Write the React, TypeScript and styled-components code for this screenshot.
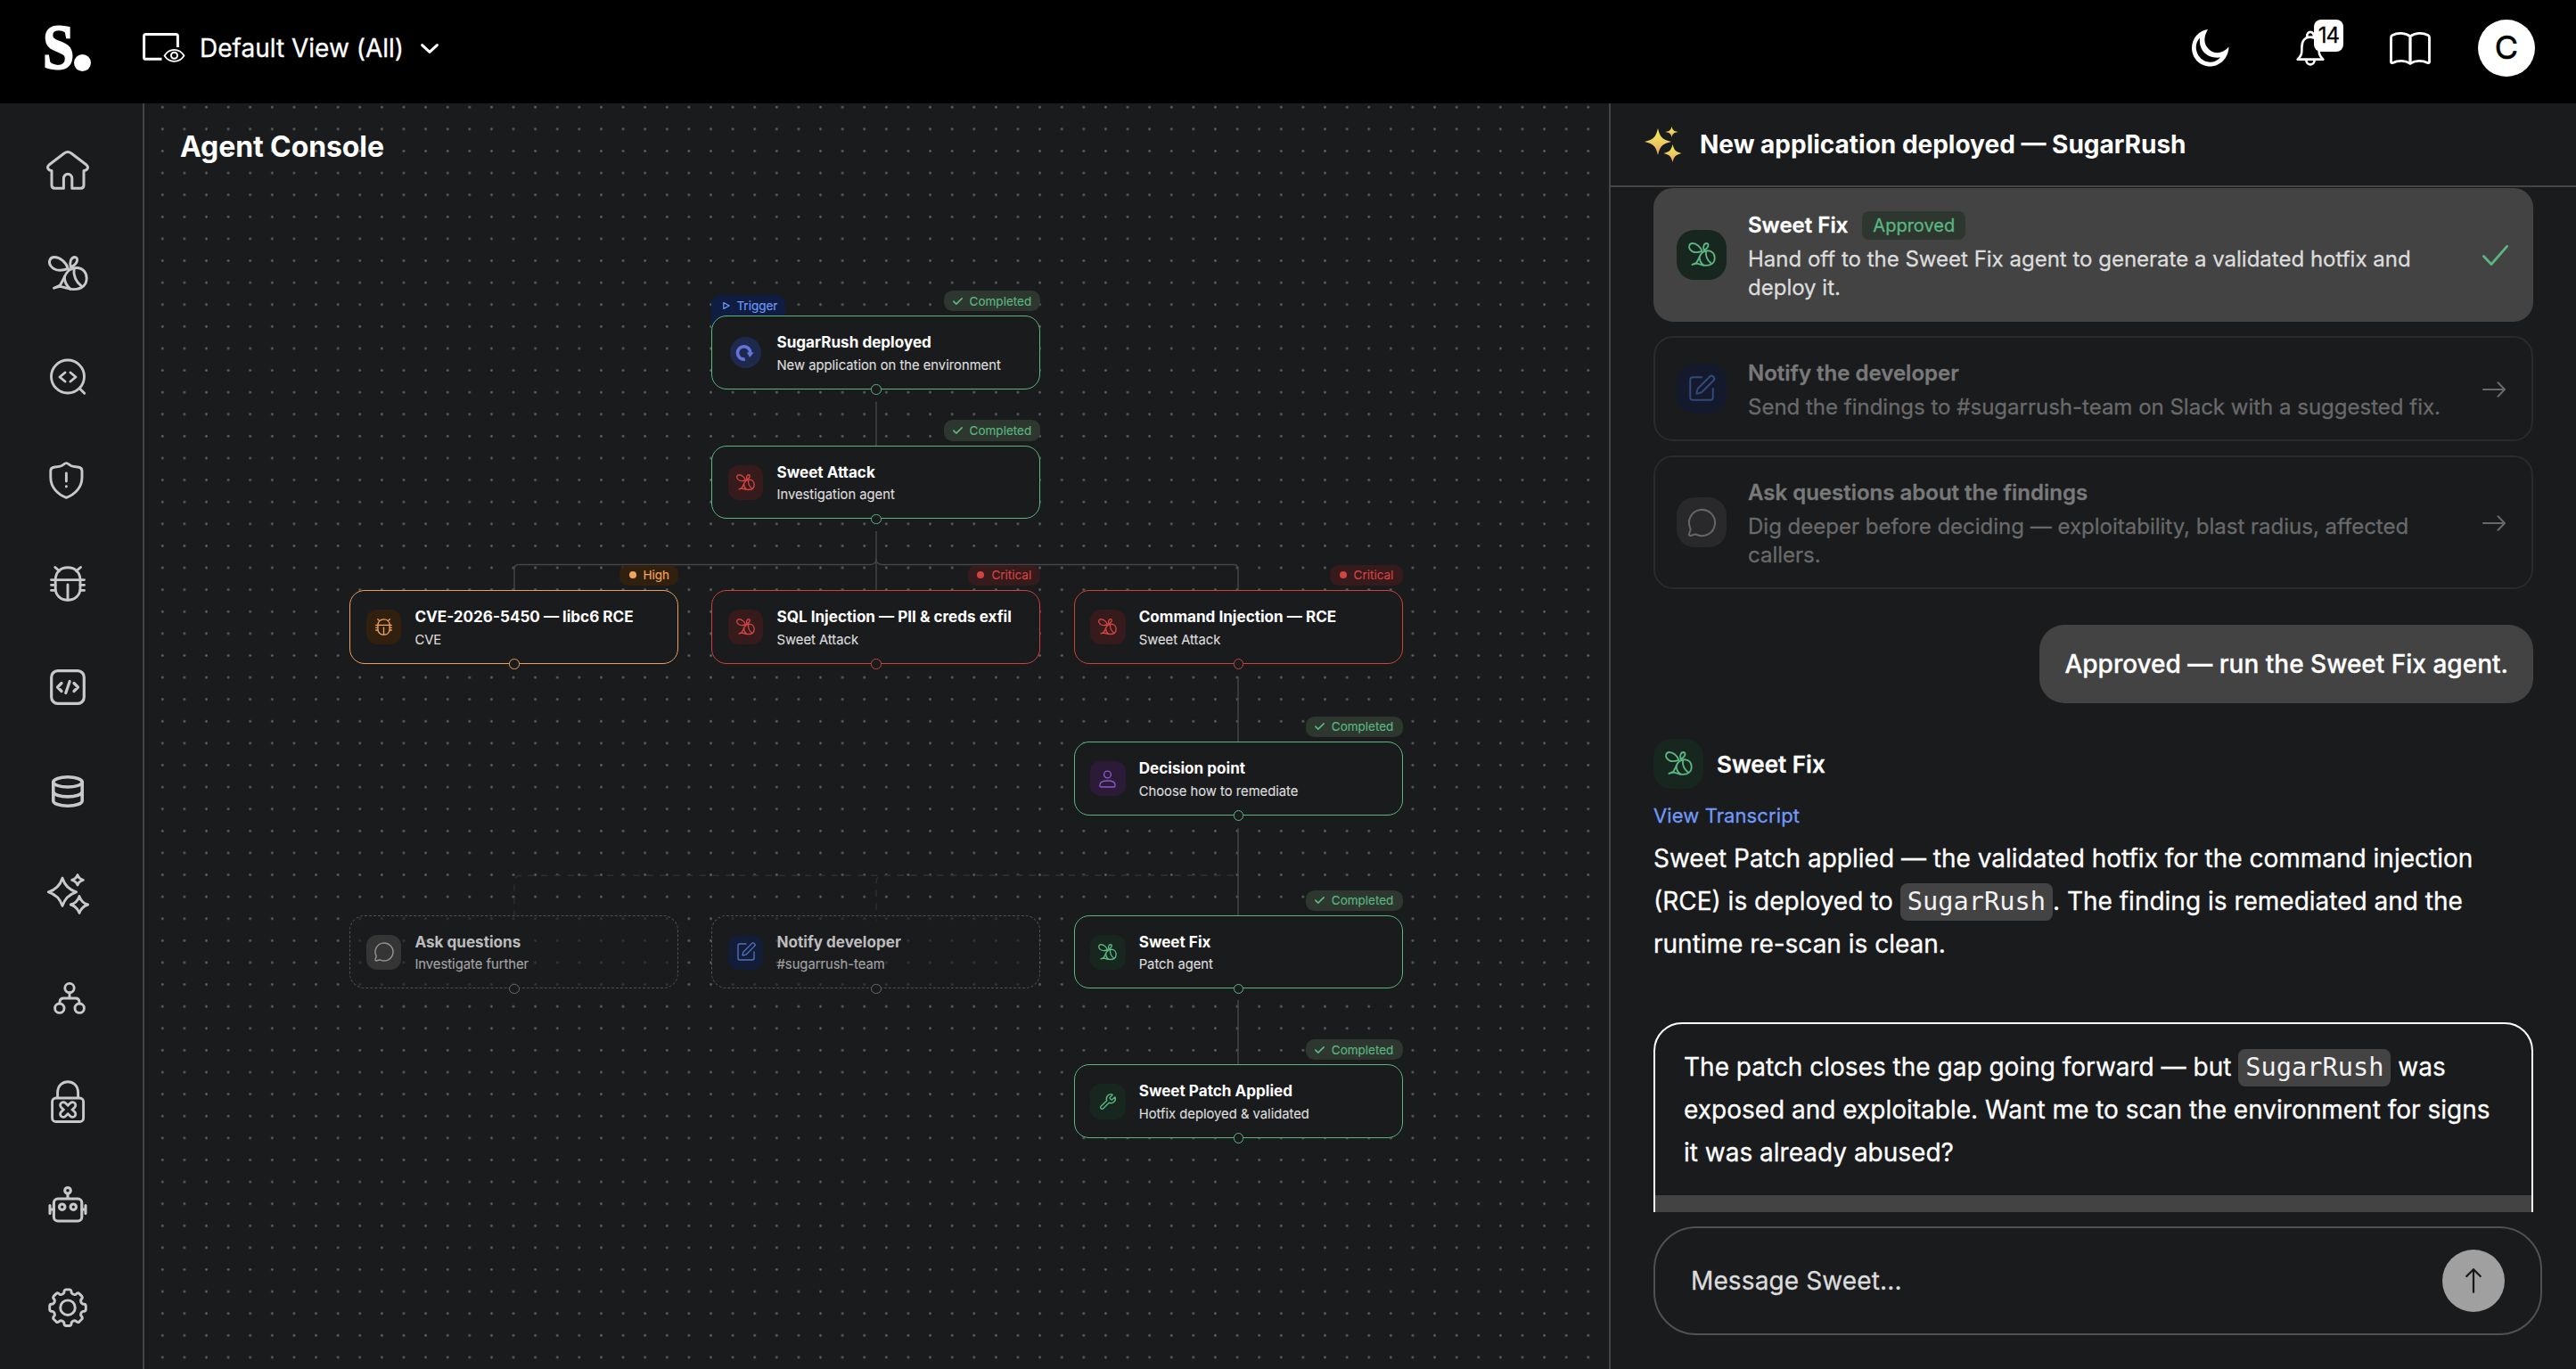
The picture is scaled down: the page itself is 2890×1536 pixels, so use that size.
import React from "react";
import styled, { createGlobalStyle, css } from "styled-components";
import { SquarePen, Wrench, MessageCircle } from "lucide-react";

const c = {
  bg: "#1a1b1d",
  line: "#444445",
  soft: "#434343",
  icon: "#c9c9c9",
  text: "#ffffff",
  dim: "#dcdcdc",
  green: "#5bb682",
  greenBg: "#17261f",
  pillGreen: "#2d362f",
  red: "#d14442",
  redBg: "#361a1c",
  orange: "#f0a45f",
  orangeBg: "#32200f",
  blue: "#7099f8",
  blueBg: "#0f1d42",
  purple: "#8c58c8",
  purpleBg: "#2b1b38",
};

const GlobalStyle = createGlobalStyle`
  * { box-sizing: border-box; }
  html, body { margin: 0; background: #000; }
  body {
    font-family: Inter, "Liberation Sans", sans-serif;
    color: ${c.text};
    overflow: hidden;
    -webkit-text-stroke: 0.3px currentColor;
  }
`;

/* ---------- shell ---------- */

const Shell = styled.div`
  width: 2890px;
  height: 1536px;
  display: flex;
  flex-direction: column;
  background: ${c.bg};
  overflow: hidden;
`;

const TopBar = styled.header`
  height: 116px;
  flex: none;
  background: #000;
  display: flex;
  align-items: flex-start;
  justify-content: space-between;
  padding: 22px 46px 0 50px;
`;

const TopLeft = styled.div`
  display: flex;
  align-items: center;
  height: 64px;
`;

const Logo = styled.div`
  width: 110px;
  height: 64px;
  display: flex;
  align-items: flex-end;
  padding-bottom: 6px;
`;

const LogoLetter = styled.span`
  font: 700 72px/47px "Liberation Serif", serif;
  width: 40px;
  height: 50px;
  margin: 0 -5px 0 -2px;
  -webkit-text-stroke: 2px #fff;
  transform: scaleX(0.88);
  transform-origin: left;
`;

const LogoDot = styled.span`
  width: 19px;
  height: 19px;
  border-radius: 50%;
  background: #fff;
`;

const ViewPicker = styled.div`
  display: flex;
  align-items: center;
  font-size: 28px;
  gap: 21px;

  span { white-space: nowrap; width: 227px; margin-left: -5px; }
`;

const TopRight = styled.div`
  display: flex;
  align-items: center;
  height: 64px;
`;

const TopIcon = styled.div<{ $gap: number }>`
  position: relative;
  display: flex;
  margin-right: ${(p) => p.$gap}px;
`;

const Count = styled.span`
  position: absolute;
  left: 20px;
  top: -12px;
  width: 33px;
  height: 36px;
  border-radius: 8px;
  background: #fff;
  color: #000;
  font-size: 24px;
  line-height: 35px;
  letter-spacing: -1px;
  text-align: center;
`;

const Avatar = styled.div`
  width: 64px;
  height: 64px;
  border-radius: 50%;
  background: #fff;
  color: #000;
  font-size: 36px;
  line-height: 62px;
  text-align: center;
  -webkit-text-stroke: 0.6px #000;
`;

const Main = styled.div`
  flex: 1;
  min-height: 0;
  display: flex;
`;

const Side = styled.nav`
  width: 162px;
  flex: none;
  border-right: 2px solid ${c.line};
  display: flex;
  flex-direction: column;
  padding: 17px 8px 0 0;
`;

const SideItem = styled.a`
  height: 116.08px;
  display: flex;
  align-items: center;
  justify-content: center;
  color: ${c.icon};
`;

/* ---------- canvas ---------- */

const Canvas = styled.section`
  position: relative;
  width: 1643px;
  flex: none;
  overflow: hidden;
`;

const Backdrop = styled.svg`
  position: absolute;
  inset: 0;
`;

const CanvasTitle = styled.h1`
  position: relative;
  margin: 30px 0 0 40px;
  font-size: 32px;
  line-height: 38px;
  font-weight: 700;
  letter-spacing: -0.1px;
  -webkit-text-stroke: 0;
`;

type Tone = "green" | "red" | "orange" | "muted";
const toneColor: Record<Tone, string> = {
  green: c.green,
  red: "#c94240",
  orange: "#e89e5c",
  muted: "#6a6b6c",
};

const NodeWrap = styled.div<{ $x: number; $y: number }>`
  position: absolute;
  left: ${(p) => p.$x}px;
  top: ${(p) => p.$y}px;
  width: 369.2px;
  height: 82.4px;
`;

const NodeBox = styled.div<{ $tone: Tone }>`
  position: relative;
  height: 100%;
  display: flex;
  align-items: center;
  gap: 15px;
  padding: 0.6px 0 0 17.8px;
  border: 1.3px solid ${(p) => toneColor[p.$tone]};
  border-radius: 17px;
  background: ${c.bg};
  ${(p) =>
    p.$tone === "muted" &&
    css`
      border: 1px dashed #505152;
      background: rgba(26, 27, 29, 0.62);
    `}
`;

const Handle = styled.span<{ $tone: Tone }>`
  position: absolute;
  left: 179px;
  bottom: -6px;
  width: 11.4px;
  height: 11.4px;
  border-radius: 50%;
  border: 1.3px solid ${(p) => toneColor[p.$tone]};
  background: ${c.bg};
`;

const NodeIcon = styled.div<{ $bg: string; $fg: string; $round?: boolean }>`
  width: 39.4px;
  height: 39.4px;
  flex: none;
  display: flex;
  align-items: center;
  justify-content: center;
  border-radius: 12px;
  background: ${(p) => p.$bg};
  color: ${(p) => p.$fg};
  ${(p) =>
    p.$round &&
    css`
      width: 35px;
      height: 35px;
      margin: 0 2.2px;
      border-radius: 50%;
    `}
`;

const NodeText = styled.div<{ $muted: boolean }>`
  display: flex;
  flex-direction: column;
  gap: 2.2px;
  padding-top: 1.2px;
  white-space: nowrap;

  strong {
    font-size: 17.1px;
    line-height: 24.5px;
    font-weight: 700;
    -webkit-text-stroke: 0;
    color: ${(p) => (p.$muted ? "#bcbcbd" : "#fff")};
  }
  span {
    font-size: 14.77px;
    line-height: 22px;
    -webkit-text-stroke: 0.15px;
    color: ${(p) => (p.$muted ? "#a2a2a3" : c.dim)};
  }
`;

const Pill = styled.div<{ $kind: "done" | "high" | "critical" }>`
  position: absolute;
  right: 0;
  bottom: 87.4px;
  height: 23.5px;
  display: flex;
  align-items: center;
  font-size: 13.5px;
  padding: 0 10.3px;
  border-radius: 9.8px;
  white-space: nowrap;
  gap: 7.5px;
  -webkit-text-stroke: 0.15px;
  background: ${(p) => (p.$kind === "done" ? c.pillGreen : p.$kind === "high" ? c.orangeBg : c.redBg)};
  color: ${(p) => (p.$kind === "done" ? c.green : p.$kind === "high" ? c.orange : c.red)};
`;

const Dot = styled.i`
  width: 8px;
  height: 8px;
  margin-right: 0.5px;
  border-radius: 50%;
  background: currentColor;
`;

const TriggerTag = styled.div`
  position: absolute;
  left: 0;
  top: -23.4px;
  width: 83px;
  height: 36px;
  display: flex;
  align-items: center;
  gap: 7.6px;
  padding: 0 0 12.5px 12.5px;
  font-size: 13.5px;
  -webkit-text-stroke: 0.15px;
  border-radius: 10px 10px 0 0;
  background: ${c.blueBg};
  color: ${c.blue};
`;

/* ---------- chat panel ---------- */

const Panel = styled.aside`
  flex: 1;
  min-width: 0;
  display: flex;
  flex-direction: column;
  border-left: 2px solid ${c.line};
  background: ${c.bg};
`;

const PanelHead = styled.div`
  height: 94px;
  flex: none;
  display: flex;
  align-items: center;
  gap: 20px;
  padding: 0 0 1px 38px;
  border-bottom: 2px solid ${c.line};

  h2 {
    margin: 1px 0 0;
    font-size: 28px;
    font-weight: 700;
    -webkit-text-stroke: 0;
  }
`;

const Feed = styled.div`
  height: 1150px;
  flex: none;
  overflow: hidden;
  display: flex;
  flex-direction: column;
  padding: 1px 48px 0;
`;

const Options = styled.div`
  display: flex;
  flex-direction: column;
  gap: 16px;
  flex: none;
`;

const Option = styled.div<{ $active?: boolean; $lines: number }>`
  height: ${(p) => 86 + p.$lines * 32}px;
  flex: none;
  display: flex;
  align-items: center;
  gap: 24px;
  padding: 0 28px 0 24px;
  border: 2px solid ${(p) => (p.$active ? c.soft : "#2a2b2d")};
  background: ${(p) => (p.$active ? c.soft : "transparent")};
  border-radius: 22px;
`;

const Badge = styled.div<{ $bg: string; $fg: string }>`
  width: 56px;
  height: 56px;
  flex: none;
  display: flex;
  align-items: center;
  justify-content: center;
  border-radius: 20px;
  background: ${(p) => p.$bg};
  color: ${(p) => p.$fg};
`;

const OptionBody = styled.div<{ $active?: boolean }>`
  width: 800px;
  flex: none;
  font-size: 24px;

  header {
    height: 38px;
    display: flex;
    align-items: center;
    gap: 16px;
    margin-bottom: 3px;
    font-weight: 600;
    color: ${(p) => (p.$active ? "#fff" : "#79797a")};
  }
  p {
    margin: 0;
    line-height: 32px;
    color: ${(p) => (p.$active ? c.dim : "#69696a")};
  }
`;

const Approved = styled.span`
  height: 32px;
  line-height: 33px;
  padding: 0 12px;
  border-radius: 8px;
  background: ${c.pillGreen};
  color: ${c.green};
  font-size: 20px;
  font-weight: 400;
`;

const OptionEnd = styled.div`
  margin: 1px 1px 0 auto;
  display: flex;
  color: #69696a;
`;

const Bubble = styled.div`
  flex: none;
  align-self: flex-end;
  height: 88px;
  margin-top: 40px;
  padding: 0 28px;
  border-radius: 28px;
  background: ${c.soft};
  font-size: 28px;
  font-weight: 500;
  line-height: 88px;
`;

const AgentRow = styled.div`
  flex: none;
  display: flex;
  align-items: center;
  gap: 15px;
  height: 56px;
  margin-top: 40px;
  font-size: 26px;
  font-weight: 600;
`;

const TranscriptLink = styled.a`
  flex: none;
  margin-top: 14px;
  font-size: 22px;
  line-height: 32px;
  letter-spacing: 0.1px;
  color: ${c.blue};
`;

const Message = styled.p`
  flex: none;
  margin: 8px 0 0;
  font-size: 28px;
  line-height: 48px;
  white-space: nowrap;
`;

const Code = styled.code`
  display: inline-block;
  height: 42px;
  line-height: 41px;
  padding: 0 8px;
  border-radius: 8px;
  background: ${c.soft};
  color: #f2f2f2;
  font-family: "DejaVu Sans Mono", "Liberation Mono", monospace;
  font-size: 28.6px;
  letter-spacing: 0.03px;
  -webkit-text-stroke: 0;
`;

const Question = styled.div`
  flex: none;
  height: 300px;
  margin-top: 64px;
  border: 2px solid #fff;
  border-radius: 32px;
  overflow: hidden;

  ${Message} { margin: 24px 32px; }
`;

const QuestionFoot = styled.div`
  height: 120px;
  background: ${c.soft};
`;

const Composer = styled.div`
  flex: none;
  height: 122px;
  margin: 16px 38px 0 48px;
  padding: 0 40px;
  border: 2px solid #505153;
  border-radius: 48px;
  display: flex;
  align-items: center;
  justify-content: space-between;
  font-size: 28px;
  letter-spacing: 0.12px;
  color: ${c.dim};
`;

const Send = styled.button`
  width: 70px;
  height: 70px;
  border: 0;
  padding: 0;
  border-radius: 50%;
  background: #a0a0a0;
  display: flex;
  align-items: center;
  justify-content: center;
`;

/* ---------- icons ---------- */

const Icon = styled.svg.attrs({
  fill: "none",
  stroke: "currentColor",
  strokeLinecap: "round",
  strokeLinejoin: "round",
})`
  display: block;
  overflow: visible;
`;

const Bee = ({ w = 45, s = 2.9 }: { w?: number; s?: number }) => (
  <Icon width={w} height={(w * 40) / 45} viewBox="0 0 45 40" strokeWidth={s}>
    <path d="M22.5 14.5C20 7 13 1.5 7 1.5C1.5 1.5 0 7.5 3 11.5C7 16.8 15 17 22.5 14.5Z" />
    <path d="M25.5 13C23.5 8 25.5 1.5 30 1.5C34.5 2 33.5 9 25.5 13Z" />
    <path d="M6.5 36.2L13.5 33L17.8 25C20 18 25.5 13.5 32 13.5C39 13.5 43.2 19 43.2 25C43.2 32.5 38 37.6 28.5 37.6C22.5 37.6 18 34.8 13 34.4L6.5 36.2" />
    <path d="M18.3 23.5C18.3 30 21 34 25 37.3" />
    <path d="M29 14.2C28.2 21.5 31 29 37.5 34.2" />
  </Icon>
);

const BugIcon = ({ w = 40, s = 2.9 }: { w?: number; s?: number }) => (
  <Icon width={w} height={w} viewBox="0 0 40 40" strokeWidth={s}>
    <path d="M6.2 15.6C6.2 7 12 1.8 20 1.8S34 7 34 15.6V25C34 33 28 38.2 20 38.2S6.2 33 6.2 25Z" />
    <path d="M1.5 15.6H38.5M1.5 21.4H6M34 21.4H38.5M1.5 27.4H6M34 27.4H38.5M20 21V38M5.8 1.5L10.5 5.6M34.5 1.5L29.6 5.6" />
  </Icon>
);

const Star = ({ x, y, w, h }: { x: number; y: number; w: number; h: number }) => {
  const k = 0.24;
  return (
    <path
      d={`M${x} ${y - h}Q${x + w * k} ${y - h * k} ${x + w} ${y}Q${x + w * k} ${y + h * k} ${x} ${y + h}Q${x - w * k} ${y + h * k} ${x - w} ${y}Q${x - w * k} ${y - h * k} ${x} ${y - h}Z`}
    />
  );
};

const gearPath = (() => {
  const pts: string[] = [];
  const at = (r: number, deg: number) => {
    const a = (deg * Math.PI) / 180;
    return `${(22 + r * Math.sin(a)).toFixed(2)} ${(22 - r * Math.cos(a)).toFixed(2)}`;
  };
  for (let i = 0; i < 8; i++) {
    const d = i * 45;
    pts.push(`${i ? "L" : "M"}${at(17.2, d - 14)}`);
    pts.push(`Q${at(20.6, d - 12)} ${at(20.4, d - 6)}`);
    pts.push(`L${at(20.4, d + 6)}`);
    pts.push(`Q${at(20.6, d + 12)} ${at(17.2, d + 14)}`);
    pts.push(`Q${at(15.2, d + 22.5)} ${at(17.2, d + 31)}`);
  }
  return pts.join("") + "Z";
})();

const sideIcons: React.ReactNode[] = [
  <Icon width={48} height={44} viewBox="0 0 48 44" strokeWidth={3}>
    <path d="M6 22.4C1.6 22.4 .2 18.6 3 16L20 3C22.8 1 25.2 1 28 3L45 16C47.8 18.6 46.4 22.4 42 22.4V38.5C42 41.3 40.8 42.3 38.5 42.3H28.8V31.5C28.8 24.6 19.4 24.6 19.4 31.5V42.3H9.5C7.2 42.3 6 41.3 6 38.5Z" />
  </Icon>,
  <Bee />,
  <Icon width={40} height={40} viewBox="0 .5 40 40" strokeWidth={2.9}>
    <circle cx="20" cy="20" r="18.5" />
    <path d="M33.5 33.5L38.7 38.7M17 15.5L11 20.5L17 25.5M23 15.5L29 20.5L23 25.5" />
  </Icon>,
  <Icon width={42} height={42} viewBox="0 0 42 42" strokeWidth={2.9}>
    <path d="M19.4 1.6C22 1.6 23 4.8 27.5 5.4L33.5 6.2C36 6.6 37 8 37 10.5V17.5C37 28.5 29.5 36.6 19.4 40.3C9.3 36.6 1.8 28.5 1.8 17.5V10.5C1.8 8 2.8 6.6 5.3 6.2L11.3 5.4C15.8 4.8 16.8 1.6 19.4 1.6Z" />
    <path d="M19.4 13V22M19.4 27.8V28" />
  </Icon>,
  <BugIcon />,
  <Icon width={40} height={40} viewBox="0 0 40 40" strokeWidth={3.2}>
    <rect x="1.7" y="1.7" width="36.6" height="36.6" rx="7" />
    <path d="M13 15.5L8.5 20L13 24.5M27 15.5L31.5 20L27 24.5M22.2 13.5L17.8 26.5" />
  </Icon>,
  <Icon width={36} height={36} viewBox="0 0 36 36" strokeWidth={3.6}>
    <ellipse cx="18" cy="7.4" rx="16.2" ry="5.6" />
    <path d="M1.8 7.4V28.4C1.8 31.6 9 34.2 18 34.2S34.2 31.6 34.2 28.4V7.4M1.8 18C1.8 21.3 9 23.9 18 23.9S34.2 21.3 34.2 18" />
  </Icon>,
  <Icon width={47} height={47} viewBox="0 0 47 47" strokeWidth={2.9}>
    <Star x={17} y={20.8} w={15.6} h={15.6} />
    <Star x={34} y={7.3} w={6.3} h={5.6} />
    <Star x={36} y={35} w={9.6} h={9.4} />
  </Icon>,
  <Icon width={40} height={36} viewBox="-4 0 40 36" strokeWidth={2.9}>
    <circle cx="18" cy="6.6" r="5.2" />
    <circle cx="6.8" cy="29.2" r="5.2" />
    <circle cx="29.2" cy="29.2" r="5.2" />
    <path d="M18 12V18M7 24V22.5C7 19.5 8.6 18 11.6 18H24.4C27.4 18 29 19.5 29 22.5V24" />
  </Icon>,
  <Icon width={38} height={48} viewBox="0 0 38 48" strokeWidth={2.9}>
    <rect x="1.6" y="20" width="35" height="26.5" rx="4" />
    <path d="M7.6 19.5V14C7.6 -2.4 30.6 -2.4 30.6 14V19.5" />
    <path d="M14 28L24.4 38M24.4 28L14 38" strokeWidth={9.6} />
    <path d="M14 28L24.4 38M24.4 28L14 38" strokeWidth={4} stroke={c.bg} />
  </Icon>,
  <Icon width={44} height={42} viewBox="0 0 44 42" strokeWidth={3.1}>
    <circle cx="22" cy="4.8" r="3.3" />
    <rect x="6.4" y="14" width="31.4" height="25" rx="4.5" />
    <circle cx="15.7" cy="23.2" r="3.2" />
    <circle cx="28.3" cy="23.2" r="3.2" />
    <path d="M22 8.5V13M2 21.5V30.5M42 21.5V30.5M2.5 26H6M38 26H41.5" />
  </Icon>,
  <Icon width={44} height={44} viewBox="0 .8 44 44" strokeWidth={2.9}>
    <path d={gearPath} />
    <circle cx="22" cy="22" r="8.3" />
  </Icon>,
];

const UserIcon = () => (
  <Icon width={19} height={20} viewBox="0 0 19 20" strokeWidth={1.4}>
    <circle cx="9.5" cy="5" r="3.9" />
    <path d="M1 16.5C1 13.5 4 12 9.5 12S18 13.5 18 16.5V17.5C18 18.5 17.5 19 16.6 19H2.4C1.5 19 1 18.5 1 17.5Z" />
  </Icon>
);

const ReloadIcon = () => (
  <Icon width={22} height={20} viewBox="1 0 22 20" strokeWidth={3.6}>
    <path d="M10.8 17A7.2 7.2 0 1 1 16.8 10.5" strokeLinecap="butt" />
    <path d="M12.8 9.5L20.6 9.5L16.2 15Z" fill="currentColor" stroke="none" />
  </Icon>
);

const CheckSmall = () => (
  <Icon width={11} height={8} viewBox="0 0 11 8" strokeWidth={1.7}>
    <path d="M.8 4.2L3.8 7.1L10.2 .8" />
  </Icon>
);

const ArrowRight = () => (
  <Icon width={26} height={18} viewBox="0 0 26 18" strokeWidth={2}>
    <path d="M1 9H25M17.5 1.2L25 9L17.5 16.8" />
  </Icon>
);

/* ---------- data ---------- */

type NodeData = {
  id: string;
  col: number;
  y: number;
  tone: Tone;
  title: string;
  sub: string;
  icon: React.ReactNode;
  bg: string;
  fg: string;
  pill?: "done" | "high" | "critical";
  trigger?: boolean;
};

const columns = [230.2, 636.3, 1042.5];
const bee = <Bee w={21} s={2.9} />;

const nodes: NodeData[] = [
  { id: "deploy", col: 1, y: 238.3, tone: "green", title: "SugarRush deployed", sub: "New application on the environment", icon: <ReloadIcon />, bg: "#1f294d", fg: "#6474d6", pill: "done", trigger: true },
  { id: "attack", col: 1, y: 383.8, tone: "green", title: "Sweet Attack", sub: "Investigation agent", icon: bee, bg: c.redBg, fg: c.red, pill: "done" },
  { id: "cve", col: 0, y: 546.2, tone: "orange", title: "CVE-2026-5450 — libc6 RCE", sub: "CVE", icon: <BugIcon w={19} s={2.7} />, bg: c.orangeBg, fg: c.orange, pill: "high" },
  { id: "sqli", col: 1, y: 546.2, tone: "red", title: "SQL Injection — PII & creds exfil", sub: "Sweet Attack", icon: bee, bg: c.redBg, fg: c.red, pill: "critical" },
  { id: "cmdi", col: 2, y: 546.2, tone: "red", title: "Command Injection — RCE", sub: "Sweet Attack", icon: bee, bg: c.redBg, fg: c.red, pill: "critical" },
  { id: "decision", col: 2, y: 716.2, tone: "green", title: "Decision point", sub: "Choose how to remediate", icon: <UserIcon />, bg: c.purpleBg, fg: c.purple, pill: "done" },
  { id: "ask", col: 0, y: 911, tone: "muted", title: "Ask questions", sub: "Investigate further", icon: <MessageCircle size={24} strokeWidth={1.4} />, bg: "#343534", fg: "#959596" },
  { id: "notify", col: 1, y: 911, tone: "muted", title: "Notify developer", sub: "#sugarrush-team", icon: <SquarePen size={24} strokeWidth={1.4} />, bg: "#131d38", fg: "#4f71bd" },
  { id: "fix", col: 2, y: 911, tone: "green", title: "Sweet Fix", sub: "Patch agent", icon: bee, bg: c.greenBg, fg: c.green, pill: "done" },
  { id: "patch", col: 2, y: 1078.4, tone: "green", title: "Sweet Patch Applied", sub: "Hotfix deployed & validated", icon: <Wrench size={20} strokeWidth={1.7} />, bg: c.greenBg, fg: c.green, pill: "done" },
];

const pillText = { done: "Completed", high: "High", critical: "Critical" };

function FlowNode({ n }: { n: NodeData }) {
  return (
    <NodeWrap $x={columns[n.col]} $y={n.y}>
      {n.trigger && (
        <TriggerTag>
          <Icon width={8} height={8} viewBox="0 0 8 8" strokeWidth={1.2}>
            <path d="M.8 .6L7.2 4L.8 7.4Z" />
          </Icon>
          Trigger
        </TriggerTag>
      )}
      {n.pill && (
        <Pill $kind={n.pill}>
          {n.pill === "done" ? <CheckSmall /> : <Dot />}
          {pillText[n.pill]}
        </Pill>
      )}
      <NodeBox $tone={n.tone}>
        <NodeIcon $bg={n.bg} $fg={n.fg} $round={n.trigger}>
          {n.icon}
        </NodeIcon>
        <NodeText $muted={n.tone === "muted"}>
          <strong>{n.title}</strong>
          <span>{n.sub}</span>
        </NodeText>
      </NodeBox>
      <Handle $tone={n.tone} />
    </NodeWrap>
  );
}

const GRID = 24.608;

export default function App() {
  return (
    <>
      <GlobalStyle />
      <Shell>
        <TopBar>
          <TopLeft>
            <Logo>
              <LogoLetter>S</LogoLetter>
              <LogoDot />
            </Logo>
            <ViewPicker>
              <Icon width={48} height={34} viewBox="0 0 48 34" strokeWidth={3}>
                <path d="M21.5 29.3H3.5C2.2 29.3 1.6 28.7 1.6 27.4V3.6C1.6 2.3 2.2 1.6 3.5 1.6H37.5C38.8 1.6 39.4 2.3 39.4 3.6V16" strokeLinecap="butt" />
                <path d="M24.5 25.5C30 16.6 41 16.6 46.5 25.5C41 34 30 34 24.5 25.5Z" strokeWidth={1.8} />
                <circle cx="35.5" cy="25.3" r="3.5" strokeWidth={2} />
              </Icon>
              <span>Default View (All)</span>
              <Icon width={20} height={11} viewBox="0 0 20 11" strokeWidth={3}>
                <path d="M1.6 1.6L10 9.4L18.4 1.6" />
              </Icon>
            </ViewPicker>
          </TopLeft>
          <TopRight>
            <TopIcon $gap={75}>
              <Icon width={42} height={42} viewBox="0 0 42 42">
                <path
                  d="M18 0C12 10 14 18 20 23C26 28 34.5 27.5 41.5 19.5C41 33 31 41.5 20.5 41.5C9 41.5 0 32 0 21C0 10 8 1 18 0ZM9 9.5C3 15.5 4 24.5 8 30C14 38.3 25 39 32 31.5C24 32.3 17 30 13 25C9.5 20.5 8.5 15 9 9.5Z"
                  fill="#fff"
                  fillRule="evenodd"
                  stroke="none"
                />
              </Icon>
            </TopIcon>
            <TopIcon $gap={73}>
              <Icon width={32} height={40} viewBox="0 0 32 40" strokeWidth={2.6}>
                <path d="M1.6 32.6C6.8 28 6.4 25 6.4 19C6.4 11.5 10 7.6 16 7.6S25.6 11.5 25.6 19C25.6 25 25.2 28 30.4 32.6Z" />
                <path d="M12.4 7.5C11 0 21 0 19.6 7.5M11.4 33.5C11.4 40 20.6 40 20.6 33.5" />
              </Icon>
              <Count>14</Count>
            </TopIcon>
            <TopIcon $gap={53}>
              <Icon width={46} height={37} viewBox="0 0 46 37" strokeWidth={2.8}>
                <path d="M23 5C18 .6 9 .4 3 3.6C1.9 4.2 1.5 4.8 1.5 6V33.4C1.5 34.6 2.4 35 3.5 34.4C9.5 31.4 18 31.8 23 35.4C28 31.8 36.5 31.4 42.5 34.4C43.6 35 44.5 34.6 44.5 33.4V6C44.5 4.8 44.1 4.2 43 3.6C37 .4 28 .6 23 5ZV35" />
                <path d="M23 5V35" />
              </Icon>
            </TopIcon>
            <Avatar>C</Avatar>
          </TopRight>
        </TopBar>

        <Main>
          <Side>
            {sideIcons.map((icon, i) => (
              <SideItem key={i}>{icon}</SideItem>
            ))}
          </Side>

          <Canvas>
            <Backdrop width={1643} height={1420}>
              <defs>
                <pattern id="grid" x={20.3 - GRID / 2} y={4.3 - GRID / 2} width={GRID} height={GRID} patternUnits="userSpaceOnUse">
                  <circle cx={GRID / 2} cy={GRID / 2} r="1.4" fill="#5e5f60" />
                </pattern>
              </defs>
              <rect width="1643" height="1420" fill="url(#grid)" />
              <g fill="none" stroke="#434446" strokeWidth="1.5">
                <path d="M821 334.7V384M821 480V546M1227 643V716M1227 813V911M1227 1006V1078.5" />
                <path d="M821 511C821 515.5 819 517.5 814 517.5H420C416.5 517.5 415 519 415 522.5V546" />
                <path d="M821 511C821 515.5 823 517.5 828 517.5H1222C1225.5 517.5 1227 519 1227 522.5V546" />
              </g>
              <g fill="none" stroke="#2d2e30" strokeWidth="1.5" strokeDasharray="7.4 7.4">
                <path d="M1222 866.3H423C417 866.3 415 869 415 874V918" />
                <path d="M1222 866.3H829C823 866.3 821 869 821 874V918" />
              </g>
            </Backdrop>
            <CanvasTitle>Agent Console</CanvasTitle>
            {nodes.map((n) => (
              <FlowNode key={n.id} n={n} />
            ))}
          </Canvas>

          <Panel>
            <PanelHead>
              <Icon width={42} height={40} viewBox="0 0 42 40">
                <defs>
                  <linearGradient id="gold" x1="0" y1="0" x2="0" y2="1">
                    <stop offset="0" stopColor="#f3f04f" />
                    <stop offset="0.6" stopColor="#ecc765" />
                    <stop offset="1" stopColor="#ee9d68" />
                  </linearGradient>
                </defs>
                <g stroke="none">
                  <path fill="url(#gold)" d="M15 2C17.5 12 19.5 14.5 30 17C19.5 19.5 17.5 22 15 32C12.5 22 10.5 19.5 0 17C10.5 14.5 12.5 12 15 2Z" />
                  <path fill="url(#gold)" d="M30.5 0C31.5 3.8 32.5 5 37.5 6C32.5 7 31.5 8.2 30.5 12C29.5 8.2 28.5 7 23.5 6C28.5 5 29.5 3.8 30.5 0Z" />
                  <path fill="url(#gold)" d="M31.5 20C33.2 26.4 34.5 28.2 41.5 30C34.5 31.8 33.2 33.6 31.5 40C29.8 33.6 28.5 31.8 21.5 30C28.5 28.2 29.8 26.4 31.5 20Z" />
                </g>
              </Icon>
              <h2>New application deployed — SugarRush</h2>
            </PanelHead>

            <Feed>
              <Options>
                <Option $active $lines={2}>
                  <Badge $bg={c.greenBg} $fg={c.green}>
                    <Bee w={31} s={2.7} />
                  </Badge>
                  <OptionBody $active>
                    <header>
                      Sweet Fix <Approved>Approved</Approved>
                    </header>
                    <p>Hand off to the Sweet Fix agent to generate a validated hotfix and deploy it.</p>
                  </OptionBody>
                  <OptionEnd>
                    <Icon width={29} height={23} viewBox="0 0 29 23" strokeWidth={2.8} color={c.green}>
                      <path d="M1.4 12.5L10 21.5L27.6 1.4" />
                    </Icon>
                  </OptionEnd>
                </Option>
                <Option $lines={1}>
                  <Badge $bg="#141a2c" $fg="#33497c">
                    <SquarePen size={34} strokeWidth={1.4} />
                  </Badge>
                  <OptionBody>
                    <header>Notify the developer</header>
                    <p>Send the findings to #sugarrush-team on Slack with a suggested fix.</p>
                  </OptionBody>
                  <OptionEnd>
                    <ArrowRight />
                  </OptionEnd>
                </Option>
                <Option $lines={2}>
                  <Badge $bg="#29292b" $fg="#656566">
                    <MessageCircle size={35} strokeWidth={1.4} />
                  </Badge>
                  <OptionBody>
                    <header>Ask questions about the findings</header>
                    <p>Dig deeper before deciding — exploitability, blast radius, affected callers.</p>
                  </OptionBody>
                  <OptionEnd>
                    <ArrowRight />
                  </OptionEnd>
                </Option>
              </Options>

              <Bubble>Approved — run the Sweet Fix agent.</Bubble>

              <AgentRow>
                <Badge $bg={c.greenBg} $fg={c.green}>
                  <Bee w={31} s={2.7} />
                </Badge>
                Sweet Fix
              </AgentRow>
              <TranscriptLink>View Transcript</TranscriptLink>
              <Message>
                Sweet Patch applied — the validated hotfix for the command injection
                <br />
                (RCE) is deployed to <Code>SugarRush</Code>. The finding is remediated and the
                <br />
                runtime re-scan is clean.
              </Message>

              <Question>
                <Message>
                  The patch closes the gap going forward — but <Code>SugarRush</Code> was
                  <br />
                  exposed and exploitable. Want me to scan the environment for signs
                  <br />
                  it was already abused?
                </Message>
                <QuestionFoot />
              </Question>
            </Feed>

            <Composer>
              Message Sweet...
              <Send aria-label="Send">
                <Icon width={18} height={28} viewBox="0 0 18 28" strokeWidth={2.2} color="#161718">
                  <path d="M9 1.2V26.8M1.2 9L9 1.2L16.8 9" />
                </Icon>
              </Send>
            </Composer>
          </Panel>
        </Main>
      </Shell>
    </>
  );
}
